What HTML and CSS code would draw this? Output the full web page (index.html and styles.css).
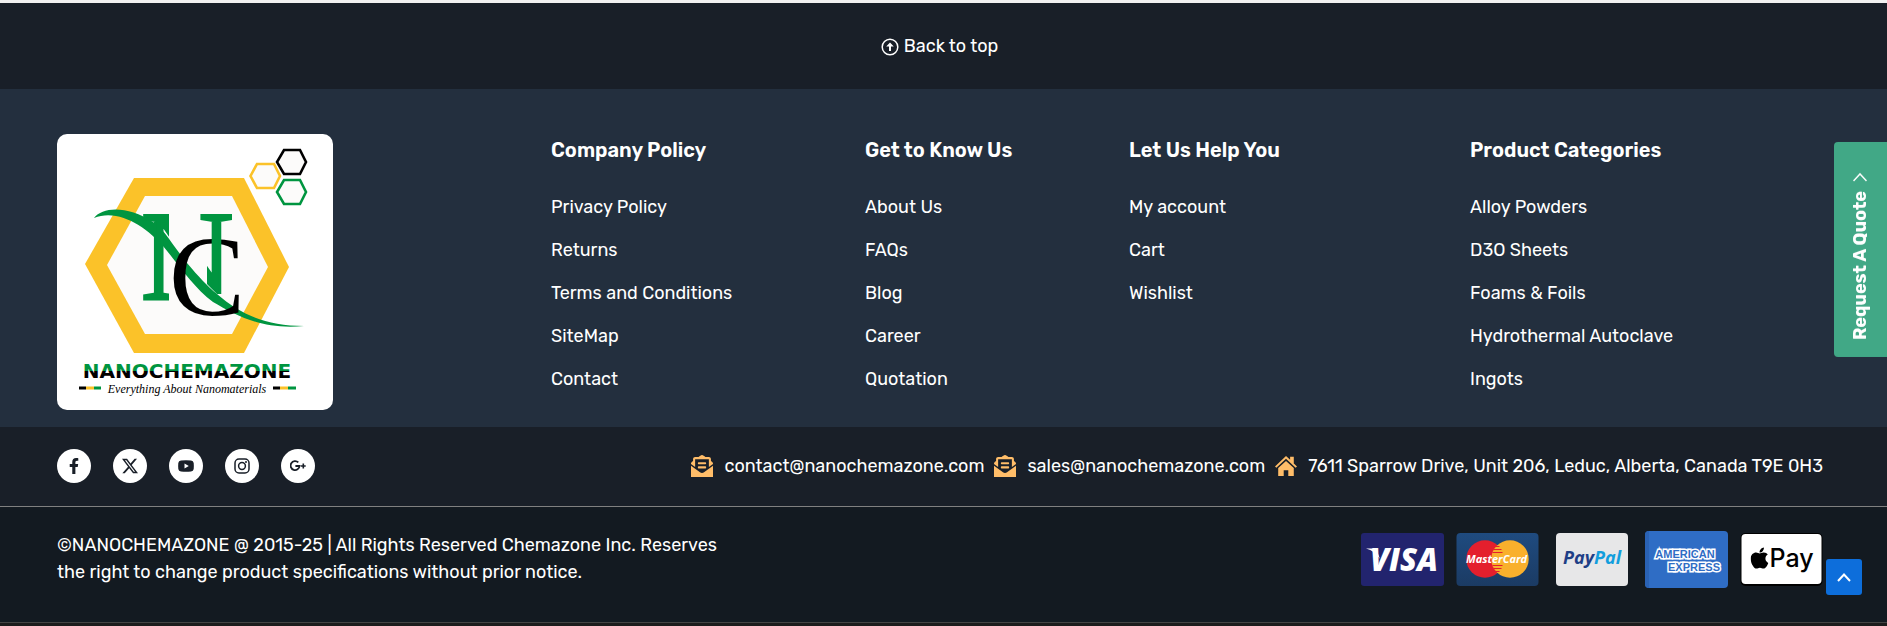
FILE: index.html
```html
<!DOCTYPE html>
<html lang="en">
<head>
    <meta charset="UTF-8">
    <meta name="viewport" content="width=device-width, initial-scale=1.0">
    <title>Nanochemazone</title>
    <link rel="stylesheet" href="styles.css">
</head>
<body>
    <footer class="footer">
        <div class="back_top">
            <a href="#">
                <svg class="back_icon" viewBox="0 0 18 18"><circle cx="9" cy="9" r="7.8" fill="none" stroke="#fff" stroke-width="1.5"/><path d="M9 4.400 12.800 8.600H10V13H8V8.600H5.200Z" fill="#fff"/></svg>
                Back to top
            </a>
        </div>

        <div class="footer_main">
            <a class="logo" href="#" aria-label="Nanochemazone">
                <svg viewBox="0 0 276 276">
                    <defs>
                        <linearGradient id="name_fill" x1="0" y1="0" x2="0" y2="1">
                            <stop offset="0.5" stop-color="#009540"/>
                            <stop offset="0.5" stop-color="#000"/>
                        </linearGradient>
                        <clipPath id="stems">
                            <path d="M78 70H112V172H78ZM136 70H182V160H160L150 150V96H136Z"/>
                        </clipPath>
                    </defs>
                    <path d="M77 44H187L232 133 187 219H77L28 130Z" fill="#fbc229"/>
                    <path d="M88 62H175L211 133 175 200H88L50 131Z" fill="#fcfbfa"/>
                    <g fill="#fcfbfa" stroke-width="2.6">
                        <path d="M200 30H217L223 42 217 54H200L193.500 42Z" stroke="#fbc229"/>
                        <path d="M227 16H243L249 28 243 40H227L220 28Z" stroke="#000"/>
                        <path d="M227 46H243L249 58 243 70H227L220 58Z" stroke="#009540"/>
                    </g>
                    <path d="M37 84C46 72 72 72 96 88C106 94 112 106 130 129C142 143 150 152 160 160C184 181 210 192 247 192C206 196 180 182 156 168C136 153 122 131 106 112C90 94 62 74 37 84Z" fill="#009540"/>
                    <text class="logo_c" x="112" y="181">C</text>
                    <text class="logo_n" x="84" y="165" clip-path="url(#stems)">N</text>
                    <text class="logo_name" x="130" y="244">NANOCHEMAZONE</text>
                    <text class="logo_tag" x="130" y="259">Everything About Nanomaterials</text>
                    <g>
                        <path d="M22 254h7M216 254h7" stroke="#000" stroke-width="3"/>
                        <path d="M29 254h8M223 254h8" stroke="#fbc229" stroke-width="3"/>
                        <path d="M37 254h7M231 254h8" stroke="#009540" stroke-width="3"/>
                    </g>
                </svg>
            </a>
            <div class="col">
                <h3>Company Policy</h3>
                <ul>
                    <li><a href="#">Privacy Policy</a></li>
                    <li><a href="#">Returns</a></li>
                    <li><a href="#">Terms and Conditions</a></li>
                    <li><a href="#">SiteMap</a></li>
                    <li><a href="#">Contact</a></li>
                </ul>
            </div>
            <div class="col">
                <h3>Get to Know Us</h3>
                <ul>
                    <li><a href="#">About Us</a></li>
                    <li><a href="#">FAQs</a></li>
                    <li><a href="#">Blog</a></li>
                    <li><a href="#">Career</a></li>
                    <li><a href="#">Quotation</a></li>
                </ul>
            </div>
            <div class="col">
                <h3>Let Us Help You</h3>
                <ul>
                    <li><a href="#">My account</a></li>
                    <li><a href="#">Cart</a></li>
                    <li><a href="#">Wishlist</a></li>
                </ul>
            </div>
            <div class="col">
                <h3>Product Categories</h3>
                <ul>
                    <li><a href="#">Alloy Powders</a></li>
                    <li><a href="#">D3O Sheets</a></li>
                    <li><a href="#">Foams &amp; Foils</a></li>
                    <li><a href="#">Hydrothermal Autoclave</a></li>
                    <li><a href="#">Ingots</a></li>
                </ul>
            </div>
        </div>

        <div class="contact_bar">
            <div class="social">
                <a href="#" aria-label="Facebook"><svg viewBox="0 0 320 512"><path d="M279.14 288l14.22-92.66h-88.91v-60.13c0-25.35 12.42-50.06 52.24-50.06h40.42V6.260S260.430 0 225.360 0c-73.220 0-121.080 44.380-121.080 124.720v70.620H22.890V288h81.390v224h100.170V288z"/></svg></a>
                <a href="#" aria-label="X"><svg viewBox="0 0 16 16"><path d="M12.6.75h2.454l-5.360 6.142L16 15.250h-4.937l-3.867-5.070-4.425 5.070H.316l5.733-6.570L0 .75h5.063l3.495 4.633L12.601.75Zm-.86 13.028h1.360L4.323 2.145H2.865z"/></svg></a>
                <a href="#" aria-label="YouTube"><svg viewBox="0 0 16 16"><path fill-rule="evenodd" d="M3 2.500Q8 2 13 2.500Q15.400 2.700 15.700 5Q16 8 15.700 11Q15.400 13.300 13 13.500Q8 14 3 13.500Q.6 13.300.3 11Q0 8 .3 5Q.6 2.700 3 2.500ZM6.500 5.400V10.600L10.800 8Z"/></svg></a>
                <a href="#" aria-label="Instagram"><svg viewBox="0 0 16 16"><g fill="none" stroke="#191f28" stroke-width="1.500"><rect x="1" y="1" width="14" height="14" rx="4"/><circle cx="8" cy="8" r="3.400"/></g><circle cx="12" cy="4" r="1"/></svg></a>
                <a href="#" aria-label="Google Plus"><svg viewBox="0 0 16 16"><path d="M8.300 4.400A4.500 4.500 0 1 0 9.600 8H5.400" fill="none" stroke="#191f28" stroke-width="1.800"/><path d="M13.300 5.600v4.800M10.900 8h4.800" fill="none" stroke="#191f28" stroke-width="1.600"/></svg></a>
            </div>
            <div class="contact">
                <a href="mailto:contact@nanochemazone.com"><svg viewBox="0 0 512 512"><use href="#mail"/></svg>contact@nanochemazone.com</a>
                <a href="mailto:sales@nanochemazone.com"><svg viewBox="0 0 512 512"><use href="#mail"/></svg>sales@nanochemazone.com</a>
                <a href="#"><svg viewBox="0 0 24 24"><path d="M12 1 16.500 5.300V2H20.500V9.200L24 12.600 22.500 14 12 4.200 1.500 14 0 12.600Z"/><path d="M12 6.500 20.500 14.300V23H14.500V16.500H9.500V23H3.500V14.300Z"/></svg>7611 Sparrow Drive, Unit 206, Leduc, Alberta, Canada T9E 0H3</a>
            </div>
        </div>

        <div class="copy_bar">
            <p>©NANOCHEMAZONE @ 2015-25 | All Rights Reserved Chemazone Inc. Reserves<br>the right to change product specifications without prior notice.</p>
            <div class="cards">
                <svg class="visa" viewBox="0 0 83 53">
                    <rect width="83" height="53" rx="3" fill="#22246e"/>
                    <text class="visa_text" x="43" y="38">VISA</text>
                    <path d="M5 15.500H15L19 26Q14 18 5 15.500Z" fill="#fff"/>
                </svg>
                <svg class="master" viewBox="0 0 82 53">
                    <defs>
                        <linearGradient id="master_bg" x1="0" y1="0" x2="0" y2="1">
                            <stop offset="0" stop-color="#1f4b7f"/>
                            <stop offset="1" stop-color="#1b3b64"/>
                        </linearGradient>
                    </defs>
                    <rect width="82" height="53" rx="4" fill="url(#master_bg)"/>
                    <circle cx="28.500" cy="26" r="18.700" fill="#e41f2d"/>
                    <circle cx="53.500" cy="26" r="18.700" fill="#f9b02c"/>
                    <path d="M39 13.500h4M37 16.500h8M36 19.500h10M36 32.500h10M37 35.500h8M39 38.500h4" stroke="#e41f2d" stroke-width="1.200"/>
                    <text class="master_text" x="40" y="30">MasterCard</text>
                </svg>
                <svg class="paypal" viewBox="0 0 72 53">
                    <rect width="72" height="53" rx="4" fill="#e7e7e8"/>
                    <text class="paypal_text" x="36" y="31"><tspan fill="#1f3f86">Pay</tspan><tspan fill="#129edd">Pal</tspan></text>
                </svg>
                <svg class="amex" viewBox="0 0 83 57">
                    <rect width="83" height="57" rx="4" fill="#2f6dc5"/>
                    <path d="M0 4Q0 0 4 0V57Q0 57 0 53Z" fill="#2a62b4"/>
                    <text class="amex_text" x="40" y="27">AMERICAN</text>
                    <text class="amex_text" x="49" y="40">EXPRESS</text>
                </svg>
                <svg class="apple" viewBox="0 0 82 53">
                    <rect width="82" height="53" rx="5" fill="#000"/>
                    <rect x="1" y="1" width="80" height="50" rx="4" fill="#fff"/>
                    <svg x="10" y="13" width="18" height="24" viewBox="0 0 384 512"><path d="M318.700 268.700c-.2-36.700 16.400-64.400 50-84.800-18.800-26.900-47.200-41.700-84.700-44.600-35.500-2.800-74.300 20.700-88.500 20.700-15 0-49.400-19.700-76.400-19.700C63.300 141.200 4 184.800 4 273.500q0 39.300 14.400 81.200c12.800 36.700 59 126.700 107.200 125.200 25.200-.6 43-17.900 75.800-17.900 31.800 0 48.300 17.900 76.400 17.900 48.600-.7 90.400-82.500 102.600-119.300-65.200-30.700-61.700-90-61.700-91.900zm-56.600-164.200c27.300-32.400 24.800-61.900 24-72.500-24.100 1.400-52 16.400-67.900 34.900-17.500 19.800-27.800 44.300-25.600 71.900 26.100 2 49.900-11.400 69.500-34.300z"/></svg>
                    <text class="apple_text" x="29" y="34">Pay</text>
                </svg>
            </div>
        </div>
    </footer>

    <button class="quote" type="button">Request A Quote <svg viewBox="0 0 14 9"><path d="M0.500 1 7 8 13.500 1" fill="none" stroke="#fff" stroke-width="1.500"/></svg></button>
    <button class="scroll_up" type="button" aria-label="Scroll to top"><svg viewBox="0 0 14 9"><path d="M1 8 7 1.500 13 8" fill="none" stroke="#fff" stroke-width="2"/></svg></button>

    <!-- shared mail icon -->
    <svg class="symbols">
        <symbol id="mail" viewBox="0 0 512 512"><path d="M176 216h160c8.840 0 16-7.160 16-16v-16c0-8.840-7.160-16-16-16H176c-8.840 0-16 7.160-16 16v16c0 8.840 7.160 16 16 16zm-16 80c0 8.840 7.160 16 16 16h160c8.840 0 16-7.160 16-16v-16c0-8.840-7.160-16-16-16H176c-8.840 0-16 7.160-16 16v16zm96 121.130c-16.420 0-32.840-5.060-46.860-15.190L0 250.860V512h512V250.860L302.860 401.940c-14.020 10.120-30.440 15.190-46.860 15.190zm237.610-254.180c-8.850-6.940-17.240-13.470-29.610-22.810V96c0-26.510-21.490-48-48-48h-77.550c-3.040-2.200-5.870-4.260-9.040-6.560C312.600 29.170 279.200-.35 256 0c-23.200-.35-56.590 29.170-73.410 41.440-3.170 2.300-6 4.360-9.040 6.560H96c-26.510 0-48 21.490-48 48v44.140c-12.370 9.330-20.760 15.870-29.610 22.810A48 48 0 0 0 0 200.720v10.650l96 69.350V96h320v184.720l96-69.350v-10.650c0-14.740-6.780-28.670-18.390-37.770z"/></symbol>
    </svg>
</body>
</html>
```
FILE: styles.css
```css
*{
    margin: 0;
    padding: 0;
    box-sizing: border-box;
}
body{
    background: #1c1c1c;
    font-family: Rubik, Inter, "Liberation Sans", sans-serif;
    font-size: 18px;
    line-height: 27px;
    color: #fff;
}
a{
    color: #fff;
    text-decoration: none;
}
ul{
    list-style: none;
}
svg{
    display: block;
}
button{
    border: 0;
    color: #fff;
    cursor: pointer;
}
.footer{
    border-top: 3px solid #f1f1f1;
    border-bottom: 1px solid #444;
}
.back_top{
    display: flex;
    justify-content: center;
    background: #191f28;
    padding: 30px 0 29px;
}
.back_top a{
    display: flex;
    align-items: center;
    gap: 5px;
    margin-right: 8px;
}
.back_icon{
    width: 18px;
    height: 18px;
}

/* link columns */
.footer_main{
    display: grid;
    grid-template-columns: 494fr 314fr 264fr 341fr 360fr;
    background: #232f3e;
    padding: 45px 57px 17px;
}
.logo{
    width: 276px;
    height: 276px;
    background: #fff;
    border-radius: 10px;
    overflow: hidden;
}
.logo_c, .logo_n{
    font-family: "Liberation Serif", serif;
}
.logo_c{
    font-size: 114px;
}
.logo_n{
    font-size: 128px;
    fill: #009540;
    stroke: #009540;
    stroke-width: 3px;
}
.logo_name{
    font: bold 20px "DejaVu Sans", sans-serif;
    text-anchor: middle;
    fill: url(#name_fill);
}
.logo_tag{
    font: italic 12px "Liberation Serif", serif;
    text-anchor: middle;
}
.col h3{
    font-size: 20px;
    font-weight: 600;
    line-height: 32px;
    margin-bottom: 28px;
}
.col li{
    margin-bottom: 16px;
}
.col li:last-child{
    margin-bottom: 0;
}

/* social and contact */
.contact_bar{
    display: flex;
    justify-content: space-between;
    align-items: center;
    background: #191f28;
    border-bottom: 1px solid #808080;
    padding: 22px 64px 23px 57px;
}
.social{
    display: flex;
    gap: 22px;
}
.social a{
    display: flex;
    align-items: center;
    justify-content: center;
    width: 34px;
    height: 34px;
    border-radius: 50%;
    background: #fff;
}
.social svg{
    width: 16px;
    height: 16px;
    fill: #191f28;
}
.contact{
    display: flex;
    gap: 10px;
}
.contact a{
    display: flex;
    align-items: center;
    gap: 11px;
}
.contact svg{
    width: 22px;
    height: 22px;
    fill: #ffbd69;
}

/* copyright and cards */
.copy_bar{
    display: flex;
    justify-content: space-between;
    align-items: flex-start;
    background: #131a21;
    padding: 24px 64px 34px 57px;
}
.copy_bar p{
    padding-top: 1px;
}
.cards{
    display: flex;
    align-items: center;
}
.visa, .master, .apple{
    width: 83px;
    height: 53px;
}
.visa, .amex{
    margin-right: 12px;
}
.master, .paypal{
    margin-right: 17px;
}
.paypal{
    width: 72px;
    height: 53px;
}
.amex{
    width: 83px;
    height: 57px;
}
.visa_text, .master_text, .paypal_text{
    font-family: "Open Sans", sans-serif;
    font-weight: bold;
    font-style: italic;
    text-anchor: middle;
    fill: #fff;
}
.visa_text{
    font-size: 31px;
    font-weight: 800;
}
.master_text{
    font-family: "Noto Sans", sans-serif;
    font-size: 11px;
}
.paypal_text{
    font-size: 18px;
}
.amex_text{
    font: bold 11px "Liberation Sans", sans-serif;
    text-anchor: middle;
    fill: #2f6dc5;
    stroke: #fff;
    stroke-width: 3px;
    paint-order: stroke;
}
.apple_text{
    font: 500 25px Inter, sans-serif;
}

/* floating buttons */
.quote{
    position: fixed;
    top: 142px;
    right: 0;
    display: flex;
    align-items: center;
    gap: 9px;
    writing-mode: vertical-rl;
    transform: rotate(180deg);
    width: 53px;
    padding: 17px 0 31px;
    border-radius: 0 4px 4px 0;
    background: #41a886;
    font: bold 18px/22px Rubik, Roboto, sans-serif;
}
.quote svg{
    width: 14px;
    height: 9px;
}
.scroll_up{
    position: fixed;
    right: 25px;
    bottom: 31px;
    display: flex;
    align-items: center;
    justify-content: center;
    width: 36px;
    height: 36px;
    border-radius: 3px;
    background: #0d6edb;
}
.scroll_up svg{
    width: 14px;
    height: 9px;
}
.symbols{
    display: none;
}
```
